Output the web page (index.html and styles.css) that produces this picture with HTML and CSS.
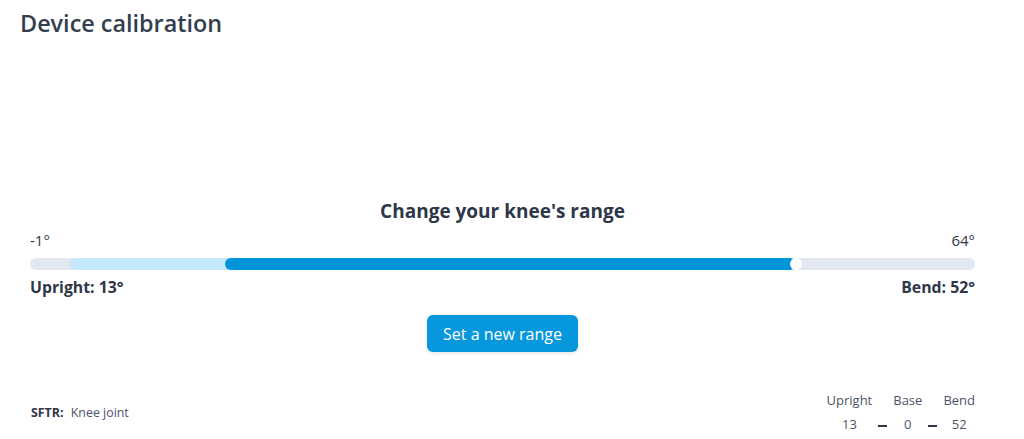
FILE: index.html
```html
<!DOCTYPE html>
<html lang="en">
<head>
  <meta charset="UTF-8">
  <title>Device calibration</title>
  <link rel="stylesheet" href="styles.css">
</head>
<body>
  <div class="page">
    <h1 class="title">Device calibration</h1>

    <div class="range">
      <h2 class="range-title">Change your knee's range</h2>
      <div class="range-ends">
        <span>-1°</span>
        <span>64°</span>
      </div>
      <div class="track">
        <div class="track-light" style="left: 4.2%; width: 76.9%;"></div>
        <div class="track-fill" style="left: 20.6%; width: 60.5%;"></div>
        <div class="track-thumb" style="left: 81.1%;"></div>
      </div>
      <div class="range-values">
        <span>Upright: 13°</span>
        <span>Bend: 52°</span>
      </div>
      <div class="range-action">
        <button class="btn">Set a new range</button>
      </div>
    </div>

    <div class="footer">
      <div class="device">
        <strong>SFTR:</strong>
        <span>Knee joint</span>
      </div>
      <div class="summary">
        <span>Upright</span>
        <span></span>
        <span>Base</span>
        <span></span>
        <span>Bend</span>
        <span class="num">13</span>
        <span class="dash"></span>
        <span class="num">0</span>
        <span class="dash"></span>
        <span class="num">52</span>
      </div>
    </div>
  </div>
</body>
</html>
```

FILE: styles.css
```css
body {
  margin: 0;
  padding: 0;
  background-color: #fff;
  font-family: "Open Sans", "Liberation Sans", sans-serif;
  color: #2d3748;
}

.page {
  height: 439px;
  display: flex;
  flex-direction: column;
}

.title {
  margin: 7px 0 0 20px;
  font-size: 23.4px;
  line-height: 32px;
  font-weight: 600;
  color: #333e4f;
}

.range {
  margin-top: 159px;
  padding: 0 49px 0 30px;
}

.range-title {
  margin: 0;
  text-align: center;
  font-size: 19px;
  line-height: 26px;
  font-weight: 700;
}

.range-ends {
  display: flex;
  justify-content: space-between;
  margin-top: 6px;
  font-size: 15px;
  line-height: 20px;
}

.track {
  position: relative;
  height: 12px;
  margin-top: 8px;
  border-radius: 6px;
  background-color: #e2e8f0;
}

.track-light,
.track-fill {
  position: absolute;
  top: 0;
  bottom: 0;
  border-radius: 6px;
}

.track-light {
  background-color: #c3e8fb;
}

.track-fill {
  background-color: #0094d9;
}

.track-thumb {
  position: absolute;
  top: 0;
  width: 12px;
  height: 12px;
  margin-left: -6px;
  border-radius: 50%;
  background-color: #fff;
}

.range-values {
  display: flex;
  justify-content: space-between;
  margin-top: 7px;
  font-size: 15.8px;
  line-height: 20px;
  font-weight: 700;
}

.range-action {
  display: flex;
  justify-content: center;
  margin-top: 18px;
}

.btn {
  padding: 0 16px;
  height: 37px;
  border: none;
  border-radius: 6px;
  background-color: #0797dc;
  color: #fff;
  font-family: inherit;
  font-size: 16px;
  box-shadow: 0 1px 4px rgba(0, 0, 0, 0.12);
  cursor: pointer;
}

.footer {
  margin-top: auto;
  display: flex;
  justify-content: space-between;
  align-items: flex-end;
  padding: 0 49px 6px 31px;
  font-size: 12.4px;
}

.device {
  padding-bottom: 12px;
  color: #4a5568;
}

.device strong {
  color: #2d3748;
  margin-right: 4px;
}

.summary {
  display: grid;
  grid-template-columns: auto 21px auto 21px auto;
  align-items: center;
  row-gap: 6px;
  font-size: 13px;
  line-height: 18px;
  color: #4a5568;
  text-align: center;
}

.summary .dash {
  justify-self: center;
  width: 9px;
  height: 2px;
  background-color: #2d3748;
  margin-top: 4px;
}
```
